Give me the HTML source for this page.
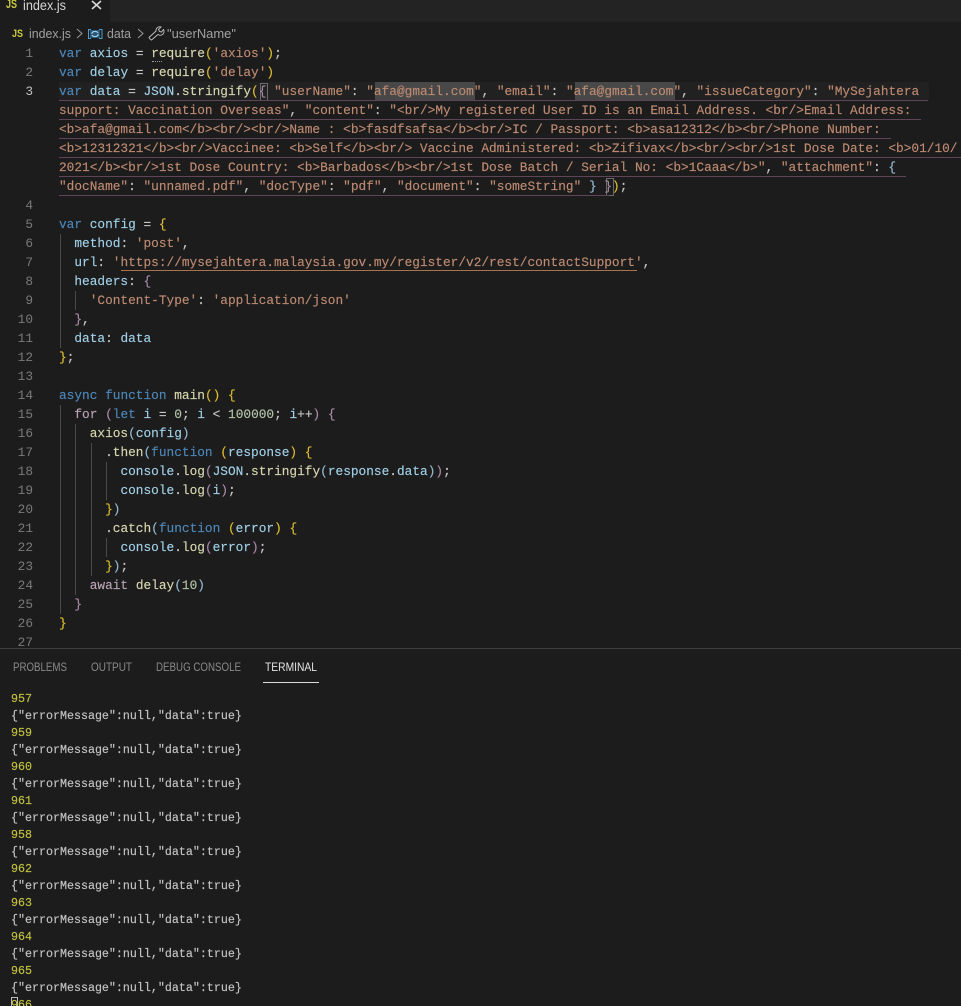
<!DOCTYPE html>
<html><head><meta charset="utf-8"><style>
html,body{margin:0;padding:0;background:#1c1c1c;overflow:hidden}
#p{position:relative;width:961px;height:1006px;overflow:hidden;background:#1c1c1c;font-family:"Liberation Mono",monospace;filter:blur(.3px)}
.r{position:absolute;left:59px;height:19px;line-height:19px;font-size:12.8px;white-space:pre;color:#c8c8c8;-webkit-text-stroke:.15px}
.n{position:absolute;left:0;width:33px;text-align:right;height:19px;line-height:19px;font-size:12.8px;color:#7a7a7a}
.g{position:absolute;width:1px;background:#4a4a4a}
.u{position:absolute;height:1px;background:#5e4658;left:59px}
.t{position:absolute;left:11px;height:17px;line-height:17px;font-size:11.67px;white-space:pre;color:#c4c4c4;-webkit-text-stroke:.15px}
.y{color:#c0c040}
.k{color:#4d87b8}.v{color:#a0cfe6}.f{color:#d6d6b0}.s{color:#bd8a72}.b{color:#dcbc30}.m{color:#a88aa8}.c{color:#b8a4b4}.w{color:#c8c8c8}.l{color:#94b8d2}.d{color:#b4c4a8}
svg{position:absolute;left:0;top:0}
</style></head><body><div id="p">
<div style="position:absolute;left:0;top:0;width:961px;height:22px;background:#232323"></div>
<div style="position:absolute;left:0;top:0;width:110px;height:22px;background:#1c1c1c"></div>

<div style="position:absolute;left:59px;top:82px;width:870px;height:18px;background:#212121"></div>
<div style="position:absolute;left:375px;top:82px;width:100px;height:18px;background:#484848"></div>
<div style="position:absolute;left:575px;top:82px;width:100px;height:18px;background:#484848"></div>
<div style="position:absolute;left:260px;top:83px;width:6px;height:16px;border:1px solid #6a6a6a"></div>
<div style="position:absolute;left:606px;top:178px;width:6px;height:16px;border:1px solid #6a6a6a"></div>

<div class="u" style="top:100px;width:869px"></div>
<div class="u" style="top:119px;width:862px"></div>
<div class="u" style="top:138px;width:832px"></div>
<div class="u" style="top:157px;width:902px"></div>
<div class="u" style="top:176px;width:847px"></div>
<div class="u" style="top:195px;width:550px"></div>
<div style="position:absolute;left:121px;top:270px;width:516px;height:1px;background:#a87450"></div>

<div class="g" style="left:60px;top:234px;height:114px"></div>
<div class="g" style="left:75px;top:291px;height:19px"></div>
<div class="g" style="left:60px;top:405px;height:209px"></div>
<div class="g" style="left:75px;top:424px;height:171px"></div>
<div class="g" style="left:91px;top:443px;height:133px"></div>
<div class="g" style="left:106px;top:462px;height:38px"></div>
<div class="g" style="left:106px;top:538px;height:19px"></div>
<div style="position:absolute;left:152px;top:61px;width:10px;height:0;border-top:1px dotted #999"></div>

<div class="n" style="top:44px">1</div>
<div class="n" style="top:63px">2</div>
<div class="n" style="top:82px;color:#c0c0c0">3</div>
<div class="n" style="top:196px">4</div>
<div class="n" style="top:215px">5</div>
<div class="n" style="top:234px">6</div>
<div class="n" style="top:253px">7</div>
<div class="n" style="top:272px">8</div>
<div class="n" style="top:291px">9</div>
<div class="n" style="top:310px">10</div>
<div class="n" style="top:329px">11</div>
<div class="n" style="top:348px">12</div>
<div class="n" style="top:367px">13</div>
<div class="n" style="top:386px">14</div>
<div class="n" style="top:405px">15</div>
<div class="n" style="top:424px">16</div>
<div class="n" style="top:443px">17</div>
<div class="n" style="top:462px">18</div>
<div class="n" style="top:481px">19</div>
<div class="n" style="top:500px">20</div>
<div class="n" style="top:519px">21</div>
<div class="n" style="top:538px">22</div>
<div class="n" style="top:557px">23</div>
<div class="n" style="top:576px">24</div>
<div class="n" style="top:595px">25</div>
<div class="n" style="top:614px">26</div>
<div class="n" style="top:633px">27</div>

<div class="r" style="top:44px"><span class="k">var</span> <span class="v">axios</span> = <span class="f">require</span><span class="b">(</span><span class="s">'axios'</span><span class="b">)</span>;</div>
<div class="r" style="top:63px"><span class="k">var</span> <span class="v">delay</span> = <span class="f">require</span><span class="b">(</span><span class="s">'delay'</span><span class="b">)</span></div>
<div class="r" style="top:82px"><span class="k">var</span> <span class="v">data</span> = <span class="v">JSON</span>.<span class="f">stringify</span><span class="b">(</span><span class="m">{</span> <span class="s">"userName"</span>: <span class="s">"afa@gmail.com"</span>, <span class="s">"email"</span>: <span class="s">"afa@gmail.com"</span>, <span class="s">"issueCategory"</span>: <span class="s">"MySejahtera</span></div>
<div class="r s" style="top:101px"><span class="s">support: Vaccination Overseas"</span><span class="w">,</span> <span class="s">"content"</span><span class="w">:</span> <span class="s">"&lt;br/&gt;My registered User ID is an Email Address. &lt;br/&gt;Email Address:</span></div>
<div class="r" style="top:120px"><span class="s">&lt;b&gt;afa@gmail.com&lt;/b&gt;&lt;br/&gt;&lt;br/&gt;Name : &lt;b&gt;fasdfsafsa&lt;/b&gt;&lt;br/&gt;IC / Passport: &lt;b&gt;asa12312&lt;/b&gt;&lt;br/&gt;Phone Number:</span></div>
<div class="r" style="top:139px"><span class="s">&lt;b&gt;12312321&lt;/b&gt;&lt;br/&gt;Vaccinee: &lt;b&gt;Self&lt;/b&gt;&lt;br/&gt; Vaccine Administered: &lt;b&gt;Zifivax&lt;/b&gt;&lt;br/&gt;&lt;br/&gt;1st Dose Date: &lt;b&gt;01/10/</span></div>
<div class="r" style="top:158px"><span class="s">2021&lt;/b&gt;&lt;br/&gt;1st Dose Country: &lt;b&gt;Barbados&lt;/b&gt;&lt;br/&gt;1st Dose Batch / Serial No: &lt;b&gt;1Caaa&lt;/b&gt;"</span>, <span class="s">"attachment"</span>: <span class="l">{</span></div>
<div class="r" style="top:177px"><span class="s">"docName"</span>: <span class="s">"unnamed.pdf"</span>, <span class="s">"docType"</span>: <span class="s">"pdf"</span>, <span class="s">"document"</span>: <span class="s">"someString"</span> <span class="l">}</span> <span class="m">}</span><span class="b">)</span>;</div>

<div class="r" style="top:215px"><span class="k">var</span> <span class="v">config</span> = <span class="b">{</span></div>
<div class="r" style="top:234px">  <span class="v">method</span>: <span class="s">'post'</span>,</div>
<div class="r" style="top:253px">  <span class="v">url</span>: <span class="s">'https://mysejahtera.malaysia.gov.my/register/v2/rest/contactSupport'</span>,</div>
<div class="r" style="top:272px">  <span class="v">headers</span>: <span class="m">{</span></div>
<div class="r" style="top:291px">    <span class="s">'Content-Type'</span>: <span class="s">'application/json'</span></div>
<div class="r" style="top:310px">  <span class="m">}</span>,</div>
<div class="r" style="top:329px">  <span class="v">data</span>: <span class="v">data</span></div>
<div class="r" style="top:348px"><span class="b">}</span>;</div>

<div class="r" style="top:386px"><span class="k">async</span> <span class="k">function</span> <span class="f">main</span><span class="b">()</span> <span class="b">{</span></div>
<div class="r" style="top:405px">  <span class="c">for</span> <span class="m">(</span><span class="k">let</span> <span class="v">i</span> = <span class="d">0</span>; <span class="v">i</span> &lt; <span class="d">100000</span>; <span class="v">i</span>++<span class="m">)</span> <span class="m">{</span></div>
<div class="r" style="top:424px">    <span class="f">axios</span><span class="l">(</span><span class="v">config</span><span class="l">)</span></div>
<div class="r" style="top:443px">      .<span class="f">then</span><span class="l">(</span><span class="k">function</span> <span class="b">(</span><span class="v">response</span><span class="b">)</span> <span class="b">{</span></div>
<div class="r" style="top:462px">        <span class="v">console</span>.<span class="f">log</span><span class="m">(</span><span class="v">JSON</span>.<span class="f">stringify</span><span class="l">(</span><span class="v">response</span>.<span class="v">data</span><span class="l">)</span><span class="m">)</span>;</div>
<div class="r" style="top:481px">        <span class="v">console</span>.<span class="f">log</span><span class="m">(</span><span class="v">i</span><span class="m">)</span>;</div>
<div class="r" style="top:500px">      <span class="b">}</span><span class="l">)</span></div>
<div class="r" style="top:519px">      .<span class="f">catch</span><span class="l">(</span><span class="k">function</span> <span class="b">(</span><span class="v">error</span><span class="b">)</span> <span class="b">{</span></div>
<div class="r" style="top:538px">        <span class="v">console</span>.<span class="f">log</span><span class="m">(</span><span class="v">error</span><span class="m">)</span>;</div>
<div class="r" style="top:557px">      <span class="b">}</span><span class="l">)</span>;</div>
<div class="r" style="top:576px">    <span class="c">await</span> <span class="f">delay</span><span class="l">(</span><span class="d">10</span><span class="l">)</span></div>
<div class="r" style="top:595px">  <span class="m">}</span></div>
<div class="r" style="top:614px"><span class="b">}</span></div>

<div style="position:absolute;left:0;top:648px;width:961px;height:358px;background:#1c1c1c;border-top:1px solid #404040;box-sizing:border-box"></div>
<div style="position:absolute;left:263px;top:682px;width:56px;height:1px;background:#dcdcdc"></div>

<svg width="961" height="1006" viewBox="0 0 961 1006" font-family="Liberation Sans, sans-serif">
<text x="6" y="8" font-size="12" font-weight="bold" fill="#cbcb41" textLength="11" lengthAdjust="spacingAndGlyphs">JS</text>
<text x="23" y="10" font-size="13.5" fill="#d4d4d4" textLength="43" lengthAdjust="spacingAndGlyphs">index.js</text>
<path d="M92 1L101 9M101 1L92 9" stroke="#d8d8d8" stroke-width="1.6" fill="none"/>
<text x="12" y="37" font-size="11" font-weight="bold" fill="#cbcb41" textLength="11" lengthAdjust="spacingAndGlyphs">JS</text>
<text x="29" y="38" font-size="13" fill="#a0a0a0" textLength="42" lengthAdjust="spacingAndGlyphs">index.js</text>
<path d="M77 29L82 33.500L77 38" stroke="#999" stroke-width="1" fill="none"/>
<path d="M91 29.500H88.500V38.500H91M99 29.500H102V38.500H99" stroke="#4f9fd6" stroke-width="1" fill="none"/>
<rect x="90" y="30" width="10" height="8" fill="#2c5570"/>
<path d="M92 34a3 2 0 0 1 6 -1M98 34a3 2 0 0 1 -6 1" stroke="#9ad0f5" stroke-width="1.200" fill="none"/>
<text x="107" y="38" font-size="13" fill="#a0a0a0" textLength="24" lengthAdjust="spacingAndGlyphs">data</text>
<path d="M138 29L143 33.500L138 38" stroke="#999" stroke-width="1" fill="none"/>
<path d="M150 39L149 37.500L156 31A3.800 3.800 0 0 1 161 27L158.500 29.500L159.500 31.500L161.500 32L163.500 29.500A3.800 3.800 0 0 1 158 34.500L151.500 40Z" stroke="#b8b8b8" stroke-width="1" fill="none"/>
<text x="167" y="38" font-size="13" fill="#a0a0a0" textLength="69" lengthAdjust="spacingAndGlyphs">"userName"</text>
<text x="13" y="671" font-size="11.5" fill="#8a8a8a" textLength="54" lengthAdjust="spacingAndGlyphs">PROBLEMS</text>
<text x="91" y="671" font-size="11.5" fill="#8a8a8a" textLength="41" lengthAdjust="spacingAndGlyphs">OUTPUT</text>
<text x="156" y="671" font-size="11.5" fill="#8a8a8a" textLength="85" lengthAdjust="spacingAndGlyphs">DEBUG CONSOLE</text>
<text x="265" y="671" font-size="11.5" fill="#e4e4e4" textLength="52" lengthAdjust="spacingAndGlyphs">TERMINAL</text>
</svg>

<div class="t y" style="top:691px">957</div>
<div class="t" style="top:708px">{"errorMessage":null,"data":true}</div>
<div class="t y" style="top:725px">959</div>
<div class="t" style="top:742px">{"errorMessage":null,"data":true}</div>
<div class="t y" style="top:759px">960</div>
<div class="t" style="top:776px">{"errorMessage":null,"data":true}</div>
<div class="t y" style="top:793px">961</div>
<div class="t" style="top:810px">{"errorMessage":null,"data":true}</div>
<div class="t y" style="top:827px">958</div>
<div class="t" style="top:844px">{"errorMessage":null,"data":true}</div>
<div class="t y" style="top:861px">962</div>
<div class="t" style="top:878px">{"errorMessage":null,"data":true}</div>
<div class="t y" style="top:895px">963</div>
<div class="t" style="top:912px">{"errorMessage":null,"data":true}</div>
<div class="t y" style="top:929px">964</div>
<div class="t" style="top:946px">{"errorMessage":null,"data":true}</div>
<div class="t y" style="top:963px">965</div>
<div class="t" style="top:980px">{"errorMessage":null,"data":true}</div>
<div class="t y" style="top:997px">966</div>
<div style="position:absolute;left:11px;top:997px;width:5px;height:9px;border:1px solid #bbb;border-bottom:none"></div>
</div></body></html>
